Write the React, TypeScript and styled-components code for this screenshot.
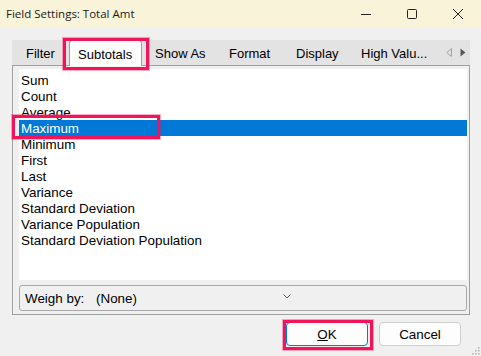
import React from "react";
import styled, { createGlobalStyle } from "styled-components";

const GlobalStyle = createGlobalStyle`
  html, body {
    margin: 0;
    padding: 0;
    background: #f0f0f0;
  }
`;

const Window = styled.div`
  position: relative;
  width: 481px;
  height: 356px;
  display: flex;
  flex-direction: column;
  background: #f0f0f0;
  font-family: "Liberation Sans", Arial, sans-serif;
  font-size: 13px;
  color: #000;
  overflow: hidden;
`;

const TitleBar = styled.div`
  height: 27px;
  display: flex;
  align-items: center;
  background: #f9f4d9;
  flex-shrink: 0;
`;

const Title = styled.div`
  flex: 1;
  padding-left: 6px;
  font-family: "Open Sans", "Noto Sans", sans-serif;
  font-size: 11.5px;
  color: #1a1a1a;
`;

const WinButton = styled.div`
  width: 46px;
  height: 27px;
  display: flex;
  align-items: center;
  justify-content: center;
`;

const Body = styled.div`
  padding: 13px 11px 0 12px;
  display: flex;
  flex-direction: column;
`;

const TabStrip = styled.div`
  height: 25px;
  display: flex;
  align-items: flex-start;
  background: #e3e3e3;
  padding-left: 3px;
`;

const Tab = styled.div<{ $w: number; $selected?: boolean }>`
  position: relative;
  box-sizing: border-box;
  width: ${(p) => p.$w}px;
  height: ${(p) => (p.$selected ? 26 : 25)}px;
  display: flex;
  align-items: center;
  padding-left: ${(p) => (p.$selected ? 8 : 11)}px;
  padding-top: 1px;
  white-space: nowrap;
  ${(p) =>
    p.$selected &&
    `
    z-index: 2;
    margin: 0 2px 0 3px;
    background: #fcfcfc;
    border: 1px solid #a0a0a0;
    border-bottom: none;
    border-radius: 3px 3px 0 0;
  `}
`;

const Mark = styled.div<{ $l: number; $t: number; $w: number; $h: number }>`
  position: absolute;
  left: ${(p) => p.$l}px;
  top: ${(p) => p.$t}px;
  width: ${(p) => p.$w}px;
  height: ${(p) => p.$h}px;
  box-sizing: border-box;
  border: 3px solid #f0145a;
  box-shadow: 0 0 0 1px rgba(240, 20, 90, 0.35);
  pointer-events: none;
  z-index: 3;
`;

const Arrows = styled.div`
  margin-left: auto;
  height: 25px;
  display: flex;
  align-items: center;
  gap: 8px;
  padding-right: 4px;
`;

const Panel = styled.div`
  height: 250px;
  box-sizing: border-box;
  border: 1px solid #a0a0a0;
  padding: 3px 2px 3px 6px;
  display: flex;
  flex-direction: column;
  gap: 5px;
`;

const List = styled.div`
  height: 211px;
  background: #fff;
  padding-top: 3px;
  box-sizing: border-box;
  font-size: 13.4px;
`;

const Item = styled.div<{ $selected?: boolean }>`
  position: relative;
  height: 16px;
  line-height: 17px;
  padding-left: 2px;
  background: ${(p) => (p.$selected ? "#0078d7" : "transparent")};
  color: ${(p) => (p.$selected ? "#fff" : "#000")};
`;

const WeighBox = styled.div`
  height: 26px;
  box-sizing: border-box;
  border: 1px solid #a8a8a8;
  border-radius: 3px;
  display: flex;
  align-items: center;
  padding-left: 5px;
  font-size: 13.4px;
`;

const WeighLabel = styled.span`
  width: 71px;
`;

const Chevron = styled.svg`
  margin-left: 146px;
  margin-top: -3px;
`;

const Footer = styled.div`
  display: flex;
  justify-content: flex-end;
  gap: 11px;
  padding: 7px 20px 0 0;
`;

const Button = styled.div<{ $focused?: boolean }>`
  position: relative;
  width: 82px;
  height: 24px;
  box-sizing: border-box;
  border: 1px solid ${(p) => (p.$focused ? "#0078d7" : "#cfcfcf")};
  border-radius: 4px;
  background: #fdfdfd;
  display: flex;
  align-items: center;
  justify-content: center;
  font-size: 13.4px;
`;

const Grip = styled.svg`
  position: absolute;
  right: 1px;
  bottom: 1px;
`;

const items = [
  "Sum",
  "Count",
  "Average",
  "Maximum",
  "Minimum",
  "First",
  "Last",
  "Variance",
  "Standard Deviation",
  "Variance Population",
  "Standard Deviation Population",
];

function App() {
  return (
    <Window>
      <GlobalStyle />
      <TitleBar>
        <Title>Field Settings: Total Amt</Title>
        <WinButton>
          <svg width="12" height="12" viewBox="0 0 12 12">
            <line x1="1" y1="6.5" x2="11" y2="6.5" stroke="#222" strokeWidth="1" />
          </svg>
        </WinButton>
        <WinButton>
          <svg width="12" height="12" viewBox="0 0 12 12">
            <rect x="1.5" y="1.5" width="9" height="9" rx="1" fill="none" stroke="#222" strokeWidth="1" />
          </svg>
        </WinButton>
        <WinButton>
          <svg width="12" height="12" viewBox="0 0 12 12">
            <path d="M1 1 L11 11 M11 1 L1 11" stroke="#222" strokeWidth="1" />
          </svg>
        </WinButton>
      </TitleBar>

      <Body>
        <TabStrip>
          <Tab $w={51}>Filter</Tab>
          <Tab $w={73} $selected>
            Subtotals
            <Mark $l={-7} $t={-3} $w={86} $h={32} />
          </Tab>
          <Tab $w={74}>Show As</Tab>
          <Tab $w={67}>Format</Tab>
          <Tab $w={65}>Display</Tab>
          <Tab $w={80}>High Valu...</Tab>
          <Arrows>
            <svg width="6" height="9" viewBox="0 0 6 9">
              <path d="M5.5 0.5 L0.8 4.5 L5.5 8.5 Z" fill="none" stroke="#a0a0a0" strokeWidth="1" />
            </svg>
            <svg width="6" height="9" viewBox="0 0 6 9">
              <path d="M0.5 0.5 L5.5 4.5 L0.5 8.5 Z" fill="#5a5a5a" />
            </svg>
          </Arrows>
        </TabStrip>

        <Panel>
          <List>
            {items.map((it) => (
              <Item key={it} $selected={it === "Maximum"}>
                {it}
                {it === "Maximum" && <Mark $l={-7} $t={-5} $w={148} $h={24} />}
              </Item>
            ))}
          </List>
          <WeighBox>
            <WeighLabel>Weigh by:</WeighLabel>
            <span>(None)</span>
            <Chevron width="8" height="5" viewBox="0 0 8 5">
              <path d="M0.5 0.5 L4 4 L7.5 0.5" fill="none" stroke="#555" strokeWidth="1" />
            </Chevron>
          </WeighBox>
        </Panel>
      </Body>

      <Footer>
        <Button $focused>
          <span>
            <u>O</u>K
          </span>
          <Mark $l={-4} $t={-3} $w={90} $h={30} />
        </Button>
        <Button>Cancel</Button>
      </Footer>

      <Grip width="9" height="9" viewBox="0 0 9 9">
        {[
          [7, 1],
          [4, 4],
          [7, 4],
          [1, 7],
          [4, 7],
          [7, 7],
        ].map(([x, y]) => (
          <rect key={`${x}-${y}`} x={x} y={y} width="1.5" height="1.5" fill="#b0b0b0" />
        ))}
      </Grip>
    </Window>
  );
}

export default App;
